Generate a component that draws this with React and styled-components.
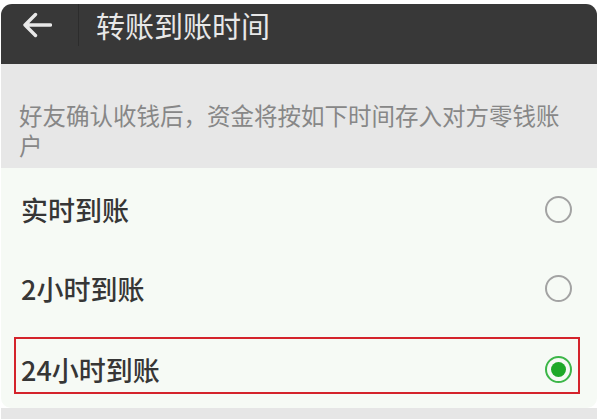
import React from "react";
import styled, { createGlobalStyle } from "styled-components";

const GlobalStyle = createGlobalStyle`
  html, body {
    margin: 0;
    padding: 0;
    background: #ffffff;
  }
  body {
    font-family: "Noto Sans CJK SC", "Noto Sans", sans-serif;
  }
`;

const Page = styled.div`
  width: 600px;
  height: 419px;
  overflow: hidden;
  background: #ffffff;
  padding: 4px 3px 0 1px;
  box-sizing: border-box;
  display: flex;
  flex-direction: column;
`;

const Header = styled.header`
  height: 60px;
  flex: none;
  background: #383838;
  border-radius: 11px 11px 0 0;
  display: flex;
  align-items: flex-start;
  box-sizing: border-box;
`;

const BackButton = styled.div`
  width: 78px;
  height: 42px;
  box-sizing: border-box;
  padding-left: 21px;
  display: flex;
  align-items: center;
  border-right: 1px solid #2c2c2c;
`;

const Title = styled.h1`
  margin: 0 0 0 17px;
  height: 42px;
  display: flex;
  align-items: center;
  font-size: 29px;
  font-weight: 400;
  color: #e8e8e8;
  letter-spacing: 0;
`;

const Notice = styled.div`
  height: 104px;
  flex: none;
  background: #e7e7e7;
  box-sizing: border-box;
  padding: 36px 28px 0 18px;
  font-size: 23.5px;
  line-height: 30px;
  color: #878787;
`;

const OptionList = styled.div`
  flex: none;
  height: 240px;
  background: #f6faf5;
  border-radius: 0 0 10px 10px;
  display: flex;
  flex-direction: column;
`;

const Row = styled.div`
  position: relative;
  height: 80px;
  flex: none;
  display: flex;
  align-items: center;
  justify-content: space-between;
  padding: ${(p) => p.$offset || "0"} 25px 0 20px;
  box-sizing: border-box;
`;

const Label = styled.span`
  font-size: 27px;
  font-weight: 500;
  color: #363636;
  line-height: 1;
`;

const Highlight = styled.div`
  position: absolute;
  left: 13px;
  right: 17px;
  top: 9px;
  height: 57px;
  border: 2px solid #d4232b;
  box-sizing: border-box;
  pointer-events: none;
`;

const RadioRing = styled.span`
  width: 27px;
  height: 27px;
  box-sizing: border-box;
  border-radius: 50%;
  border: 2px solid ${(p) => (p.$checked ? "#3cb648" : "#a3a3a3")};
  display: flex;
  align-items: center;
  justify-content: center;
  background: transparent;
`;

const RadioDot = styled.span`
  width: 15px;
  height: 15px;
  border-radius: 50%;
  background: #1ea928;
`;

const BottomBand = styled.div`
  flex: 1;
  background: #e6e6e6;
`;

function BackArrow() {
  return (
    <svg width="30" height="26" viewBox="0 0 30 26" fill="none">
      <path
        d="M28.5 13H3M13.5 2.5L3 13l10.5 10.5"
        stroke="#e8e8e8"
        strokeWidth="3.4"
        strokeLinecap="round"
        strokeLinejoin="round"
      />
    </svg>
  );
}

function Option({ label, checked, highlighted, offset }) {
  return (
    <Row $offset={offset}>
      {highlighted && <Highlight />}
      <Label>{label}</Label>
      <RadioRing $checked={checked}>{checked && <RadioDot />}</RadioRing>
    </Row>
  );
}

export default function App() {
  return (
    <>
      <GlobalStyle />
      <Page>
        <Header>
          <BackButton>
            <BackArrow />
          </BackButton>
          <Title>转账到账时间</Title>
        </Header>
        <Notice>好友确认收钱后，资金将按如下时间存入对方零钱账户</Notice>
        <OptionList>
          <Option label="实时到账" offset="2px" />
          <Option label="2小时到账" />
          <Option label="24小时到账" checked highlighted offset="2px" />
        </OptionList>
        <BottomBand />
      </Page>
    </>
  );
}
